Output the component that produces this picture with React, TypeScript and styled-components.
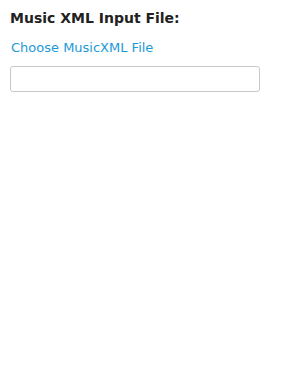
import React from 'react';
import styled, { createGlobalStyle } from 'styled-components';

const GlobalStyle = createGlobalStyle`
  body {
    margin: 0;
    background: #ffffff;
    font-family: "DejaVu Sans", sans-serif;
  }
`;

const Panel = styled.div`
  display: flex;
  flex-direction: column;
  padding: 9px 10px 0 10px;
  width: 250px;
`;

const Heading = styled.div`
  font-size: 14px;
  font-weight: 700;
  color: #222222;
  line-height: 18px;
  margin-bottom: 12px;
`;

const ChooseLink = styled.label`
  font-size: 13px;
  color: #1a9ad6;
  line-height: 18px;
  padding-left: 1px;
  margin-bottom: 9px;
  cursor: pointer;
`;

const FileField = styled.input`
  box-sizing: border-box;
  width: 250px;
  height: 26px;
  border: 1px solid #c8c8c8;
  border-radius: 3px;
  background: #ffffff;
  padding: 0 6px;
  font-family: "DejaVu Sans", sans-serif;
  font-size: 13px;
`;

export default function App() {
  return (
    <>
      <GlobalStyle />
      <Panel>
        <Heading>Music XML Input File:</Heading>
        <ChooseLink>Choose MusicXML File</ChooseLink>
        <FileField type="text" readOnly />
      </Panel>
    </>
  );
}
